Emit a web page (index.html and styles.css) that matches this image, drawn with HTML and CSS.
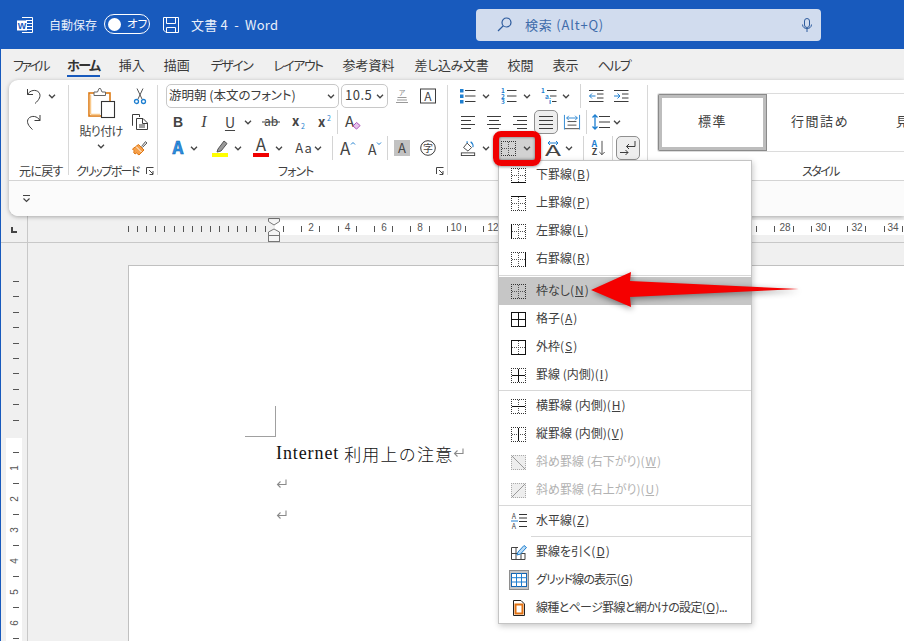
FILE: index.html
```html
<!DOCTYPE html>
<html lang="ja">
<head>
<meta charset="utf-8">
<title>文書 4 - Word</title>
<link rel="stylesheet" href="styles.css">
</head>
<body>
<svg class="defs" xmlns="http://www.w3.org/2000/svg">
  <symbol id="chev" viewBox="0 0 8 5"><path d="M1 .8 4 3.8 7 .8" fill="none" stroke="#444" stroke-width="1.3"/></symbol>
  <symbol id="dots" viewBox="0 0 15 15"><path d="M0 .5H15M0 14.500H15M.5 0V15M14.500 0V15" fill="none" stroke="#333" stroke-dasharray="1 1"/><path d="M1 7.500H15M7.500 1V15" fill="none" stroke="#555" stroke-dasharray="1 1"/></symbol>
  <symbol id="b-bottom" viewBox="0 0 15 15"><use href="#dots"/><path d="M0 14.5h15" stroke="#111"/></symbol>
  <symbol id="b-top" viewBox="0 0 15 15"><use href="#dots"/><path d="M0 .5h15" stroke="#111"/></symbol>
  <symbol id="b-left" viewBox="0 0 15 15"><use href="#dots"/><path d="M.5 0v15" stroke="#111"/></symbol>
  <symbol id="b-right" viewBox="0 0 15 15"><use href="#dots"/><path d="M14.5 0v15" stroke="#111"/></symbol>
  <symbol id="b-all" viewBox="0 0 15 15"><g fill="none" stroke="#111"><rect x=".5" y=".5" width="14" height="14"/><path d="M7.5 0v15M0 7.5h15"/></g></symbol>
  <symbol id="b-out" viewBox="0 0 15 15"><use href="#dots"/><rect x=".5" y=".5" width="14" height="14" fill="none" stroke="#111"/></symbol>
  <symbol id="b-in" viewBox="0 0 15 15"><use href="#dots"/><path d="M7.5 1v13M1 7.5h13" stroke="#111"/></symbol>
  <symbol id="b-h" viewBox="0 0 15 15"><use href="#dots"/><path d="M1 7.5h13" stroke="#111"/></symbol>
  <symbol id="b-v" viewBox="0 0 15 15"><use href="#dots"/><path d="M7.5 1v13" stroke="#111"/></symbol>
  <symbol id="b-d1" viewBox="0 0 15 15"><rect width="15" height="15" fill="#eee"/><path d="M0 .5H15M0 14.500H15M.5 0V15M14.500 0V15" fill="none" stroke="#aaa" stroke-dasharray="1 1"/><path d="M1 1 14 14" stroke="#999"/></symbol>
  <symbol id="b-d2" viewBox="0 0 15 15"><rect width="15" height="15" fill="#eee"/><path d="M0 .5H15M0 14.500H15M.5 0V15M14.500 0V15" fill="none" stroke="#aaa" stroke-dasharray="1 1"/><path d="M14 1 1 14" stroke="#999"/></symbol>
  <symbol id="ret" viewBox="0 0 11 10"><path d="M10 .5V5.500H1.500M4.500 2.500 1.500 5.500 4.500 8.500" fill="none" stroke="#8a8a8a" stroke-width="1.100"/></symbol>
</svg>

<div class="app">
  <header class="titlebar">
    <svg class="tb-word" viewBox="0 0 16 16"><path d="M5 .5H15.500V15.500H5M9 3.500H15M10 6.500H15M10 9.500H15M9 12.500H15" fill="none" stroke="#fff"/><rect y="3.500" width="10" height="10" fill="#fff"/><text x="5" y="11.500" class="tw">W</text></svg>
    <span class="tb-auto">自動保存</span>
    <span class="toggle"><span class="knob"></span><span class="toggle-t">オフ</span></span>
    <svg class="tb-save" viewBox="0 0 16 16"><g fill="none" stroke="#fff"><path d="M.5.500H15.500V15.500H3L.5 13Z"/><path d="M3.500.500V6.500H12.500V.500M3.500 15.500V10.500H12.500V15.500"/></g></svg>
    <span class="tb-title">文書 4&nbsp; -&nbsp; Word</span>
    <div class="search">
      <svg class="s-ic" viewBox="0 0 15 15"><circle cx="9.500" cy="5.500" r="4.500" fill="none" stroke="#2e5c9e" stroke-width="1.200"/><path d="M6.300 8.800 1 14" stroke="#2e5c9e" stroke-width="1.200"/></svg>
      <span class="s-text">検索 (Alt+Q)</span>
      <svg class="s-mic" viewBox="0 0 10 14"><rect x="2.500" y=".5" width="5" height="9" rx="2.500" fill="none" stroke="#2e5c9e"/><path d="M.5 6.500C.5 12 9.500 12 9.500 6.500M5 11V14" fill="none" stroke="#2e5c9e"/></svg>
    </div>
  </header>

  <nav class="tabs">
    <span class="tab kana first-tab">ファイル</span>
    <span class="tab active kana">ホーム</span>
    <span class="tab">挿入</span>
    <span class="tab">描画</span>
    <span class="tab kana wide">デザイン</span>
    <span class="tab kana wide">レイアウト</span>
    <span class="tab wide1">参考資料</span>
    <span class="tab semi wide1">差し込み文書</span>
    <span class="tab">校閲</span>
    <span class="tab">表示</span>
    <span class="tab kana">ヘルプ</span>
  </nav>

  <section class="ribbon">
    <div class="ribbon-top">
      <div class="group g-undo">
        <div class="rows">
          <div class="row">
            <svg class="ic ml17" viewBox="0 0 16 16"><path d="M1.500 1V6.500H7M1.500 6.500C4 2 10 1 13 4.500 15.500 8 13 12 9 15.500"/></svg>
            <svg class="chev ml6"><use href="#chev"/></svg>
          </div>
          <div class="row">
            <svg class="ic ml17" viewBox="0 0 16 16"><path d="M14 1V6.500H8.500M14 6.500C11.500 2 5.500 1 2.500 4.500 0 8 2.500 12 6.500 15.500"/></svg>
          </div>
        </div>
        <div class="lbl l-undo"><span class="tight1">元に戻す</span></div>
      </div>
      <i class="vsep"></i>

      <div class="group g-clip">
        <div class="rows clip-body">
          <div class="paste">
            <svg class="paste-ic" viewBox="0 0 28 31"><rect x="1" y="5" width="21" height="23" fill="#fff" stroke="#dc7a14" stroke-width="1.600"/><path d="M2.500 26.500H12M2.500 6.500V26" stroke="#f9c98c" stroke-width="1.500"/><path d="M6 7.500V4H9.500L11 .5H12.500L14 4H17.500V7.500Z" fill="#fff" stroke="#666"/><rect x="13.500" y="13.500" width="13" height="16" fill="#fff" stroke="#333" stroke-width="1.100"/></svg>
            <span class="paste-t tight1">貼り付け</span>
            <svg class="chev"><use href="#chev"/></svg>
          </div>
          <div class="clip-tools">
            <div class="row c">
              <svg class="ic" viewBox="0 0 16 16"><path d="M5 .5 10 11M11 .5 6 11" stroke="#555"/><circle cx="4.500" cy="13.500" r="2" stroke="#1e7fd0" stroke-width="1.300"/><circle cx="11.500" cy="13.500" r="2" stroke="#1e7fd0" stroke-width="1.300"/></svg>
            </div>
            <div class="row c">
              <svg class="ic" viewBox="0 0 16 16"><path d="M1 11.500H.5V.5H7.500V3"/><path d="M4.500 4.500H11L15.500 9V15.500H4.500ZM10.500 4.500V9.500H15.500M7 11H13M7 13H13"/></svg>
            </div>
            <div class="row c">
              <svg class="ic" viewBox="0 0 16 16"><path d="M9.500 6.500 13.500 1.500 15 3 10.500 7.500" fill="#d8d8d8" stroke="#666"/><path d="M6.500 4.500 12 10 7 15 4.500 13 3 14 1.500 12 2.500 11 .5 9Z" fill="#f6a04a" stroke="#de7510"/><path d="M4 6.500 9.500 12" stroke="#fff"/></svg>
            </div>
          </div>
        </div>
        <div class="lbl l-clip"><span class="tight3">クリップボード</span>
          <svg class="launch" viewBox="0 0 8 8"><path d="M.5 7V.5H7.500M3 3 7 7M7 4V7.500H3.500"/></svg></div>
      </div>
      <i class="vsep"></i>

      <div class="group g-font">
        <div class="rows">
          <div class="row start8">
            <div class="combo c-font"><span class="combo-t">游明朝 (本文のフォント)</span><svg class="chev"><use href="#chev"/></svg></div>
            <div class="combo c-size ml2"><span class="combo-t">10.5</span><svg class="chev"><use href="#chev"/></svg></div>
            <svg class="ic ml6" viewBox="0 0 16 16"><text x="8" y="7" class="t tiny g">ア</text><path d="M3.500 9.500H12.500M3 12H13M2 14.500H14" stroke="#999"/></svg>
            <svg class="ic ml10" viewBox="0 0 16 16"><rect x=".5" y="1" width="15" height="14" /><text x="8" y="13" class="t m">A</text></svg>
          </div>
          <div class="row start8">
            <span class="tx bold ml6">B</span>
            <span class="tx ital ml14">I</span>
            <span class="tx und ml14">U</span>
            <svg class="chev ml8"><use href="#chev"/></svg>
            <svg class="ic18 ml10" viewBox="0 0 18 16"><text x="9" y="12" class="t m">ab</text><path d="M0 8H18"/></svg>
            <svg class="ic14 ml12" viewBox="0 0 14 16"><text x="0" y="12" class="t m bd">x</text><text x="9" y="15" class="t tiny bl ls">2</text></svg>
            <svg class="ic14 ml12" viewBox="0 0 14 16"><text x="0" y="13" class="t m bd">x</text><text x="9" y="7" class="t tiny bl ls">2</text></svg>
            <i class="rsep ml5"></i>
            <svg class="ic18 ml6" viewBox="0 0 18 18"><text x="0" y="15" class="t lg ls">A</text><path d="M9 13.500 13 9.500 17 13 13 17Z" stroke="#a640b4" fill="#e6c4ea"/></svg>
          </div>
          <div class="row start8">
            <svg class="ic ml4" viewBox="0 0 16 18"><text x="8" y="16" class="t xl blA">A</text></svg>
            <svg class="chev ml4"><use href="#chev"/></svg>
            <svg class="bar ml14" viewBox="0 0 16 20"><path d="M6 11 12 3 15 5.500 9 13 5 14Z" fill="#999" stroke="#555"/><rect y="15" width="16" height="4" fill="#ffff00" stroke="none"/></svg>
            <svg class="chev ml6"><use href="#chev"/></svg>
            <svg class="bar ml11" viewBox="0 0 16 20"><text x="8" y="13" class="t lg">A</text><rect y="15" width="16" height="4" fill="#f00000" stroke="none"/></svg>
            <svg class="chev ml6"><use href="#chev"/></svg>
            <span class="tx aa ml12">Aa</span>
            <svg class="chev ml1"><use href="#chev"/></svg>
            <i class="rsep ml10"></i>
            <svg class="ic ml7" viewBox="0 0 16 16"><text x="0" y="15" class="t lg ls">A</text><path d="M11 4.500 13 2.500 15 4.500" stroke="#1e7fd0"/></svg>
            <svg class="ic ml11" viewBox="0 0 16 16"><text x="1" y="15" class="t m2 ls">A</text><path d="M10 2.500 12 4.500 14 2.500" stroke="#1e7fd0"/></svg>
            <i class="rsep ml4"></i>
            <span class="greyA ml6">A</span>
            <svg class="ic ml10" viewBox="0 0 16 16"><circle cx="8" cy="8" r="7.300"/><text x="8" y="12" class="t s11">字</text></svg>
          </div>
        </div>
        <div class="lbl l-font"><span class="tight2">フォント</span>
          <svg class="launch" viewBox="0 0 8 8"><path d="M.5 7V.5H7.500M3 3 7 7M7 4V7.500H3.500"/></svg></div>
      </div>
      <i class="vsep"></i>

      <div class="group g-para">
        <div class="rows">
          <div class="row">
            <svg class="ic ml12" viewBox="0 0 16 16"><path d="M5 2.500H15.500M5 8H15.500M5 13.500H15.500"/><path d="M0 1H3.500V4.500H0ZM0 6.500H3.500V10H0ZM0 12H3.500V15.500H0Z" fill="#1e7fd0" stroke="none"/></svg>
            <svg class="chev ml6"><use href="#chev"/></svg>
            <svg class="ic ml11" viewBox="0 0 16 16"><path d="M6 2.500H15.500M6 8H15.500M6 13.500H15.500"/><text x="2" y="5" class="t n">1</text><text x="2" y="10.500" class="t n">2</text><text x="2" y="16" class="t n">3</text></svg>
            <svg class="chev ml6"><use href="#chev"/></svg>
            <svg class="ic ml10" viewBox="0 0 16 16"><path d="M6 2.500H15.500M9 8H15.500M11 13.500H15.500"/><text x="2" y="5" class="t n">1</text><text x="6" y="10.500" class="t n">a</text><text x="9" y="16" class="t n">i</text></svg>
            <svg class="chev ml5"><use href="#chev"/></svg>
            <i class="rsep ml10"></i>
            <svg class="ic ml7" viewBox="0 0 16 16"><path d="M1 2.500H15.500M9 6H15.500M9 10H15.500M1 13.500H15.500"/><path d="M7.500 8H1.500M4 5.500 1.500 8 4 10.500" stroke="#1e7fd0"/></svg>
            <svg class="ic ml9" viewBox="0 0 16 16"><path d="M1 2.500H15.500M9 6H15.500M9 10H15.500M1 13.500H15.500"/><path d="M1 8H7M4.500 5.500 7 8 4.500 10.500" stroke="#1e7fd0"/></svg>
          </div>
          <div class="row">
            <svg class="ic ml12" viewBox="0 0 16 16"><path d="M1 2.500H15M1 6.500H11M1 10.500H15M1 14.500H11"/></svg>
            <svg class="ic ml10" viewBox="0 0 16 16"><path d="M1 2.500H15M3 6.500H13M1 10.500H15M3 14.500H13"/></svg>
            <svg class="ic ml10" viewBox="0 0 16 16"><path d="M1 2.500H15M5 6.500H15M1 10.500H15M5 14.500H15"/></svg>
            <span class="active-btn ml6"><svg class="ic" viewBox="0 0 16 16"><path d="M1 2.500H15M1 6.500H15M1 10.500H15M1 14.500H15"/></svg></span>
            <svg class="ic18 ml5" viewBox="0 0 18 18"><path d="M4 8.500H14M4 12.500H14M1 16.500H17"/><path d="M.5 1V17.500M17.500 1V17.500M3 4.500H15M5.500 2 3 4.500 5.500 7M12.500 2 15 4.500 12.500 7" stroke="#1e7fd0"/></svg>
            <i class="rsep ml5"></i>
            <svg class="ic18 ml5" viewBox="0 0 18 16"><path d="M7 2.500H18M7 8H18M7 13.500H18"/><path d="M3 1V15M.5 3.500 3 1 5.500 3.500M.5 12.500 3 15 5.500 12.500" stroke="#1e7fd0" stroke-width="1.300"/></svg>
            <svg class="chev ml3"><use href="#chev"/></svg>
          </div>
          <div class="row">
            <svg class="ic ml12" viewBox="0 0 16 18"><path d="M3 8.500 7 3.500 12 8.500 8 12.500Z"/><path d="M7 3.500V1.500M11 2C13.500 4 14 6 13.500 8" stroke="#1e7fd0" stroke-width="1.300"/><rect x=".5" y="14.500" width="15" height="3" /></svg>
            <svg class="chev ml6"><use href="#chev"/></svg>
            <span class="border-btn ml7"><svg class="bi"><use href="#dots"/></svg><svg class="chev"><use href="#chev"/></svg></span>
            <svg class="ic ml8" viewBox="0 0 16 16"><text x="0" y="16" class="t xw ls" textLength="16" lengthAdjust="spacingAndGlyphs">A</text><path d="M3 3H13M5 1 3 3 5 5M11 1 13 3 11 5" stroke="#1e7fd0"/></svg>
            <svg class="chev ml4"><use href="#chev"/></svg>
            <i class="rsep ml10"></i>
            <svg class="ic ml6" viewBox="0 0 16 18"><text x="4" y="8" class="t b9 bl">A</text><text x="4" y="17" class="t b9">Z</text><path d="M12.500 1V16.500M9.500 13.500 12.500 16.500 15.500 13.500"/></svg>
            <i class="rsep ml6"></i>
            <span class="active-btn ml3"><svg class="ic" viewBox="0 0 16 16"><path d="M0 12.500H8M5.500 10 8 12.500 5.500 15"/><path d="M15 1V6.500H6.500M9 4 6.500 6.500 9 9" /></svg></span>
          </div>
        </div>
      </div>
      <i class="vsep"></i>

      <div class="group g-style">
        <div class="gallery">
          <span class="sty sel">標準</span>
          <span class="sty second">行間詰め</span>
          <span class="sty third">見出し 1</span>
        </div>
        <div class="lbl l-style"><span class="tight3">スタイル</span></div>
      </div>
    </div>
    <div class="qat">
      <svg class="qat-ic" viewBox="0 0 9 8"><path d="M1 .5H8M1.500 3.500 4.500 6.500 7.500 3.500" fill="none" stroke="#444" stroke-width="1.200"/></svg>
    </div>
  </section>

  <div class="ruler-row">
    <div class="corner"><svg class="tabstop" viewBox="0 0 6 6"><path d="M0 0H2V4H6V6H0Z" fill="#444"/></svg></div>
    <svg class="h-ruler" width="876" height="26" viewBox="28 216 876 26">
      <rect x="275" y="220" width="629" height="15" fill="#fff"/>
      <line x1="128" y1="229" x2="270" y2="229" class="tick" stroke-dasharray="1 8.100"/>
      <line x1="283" y1="229" x2="904" y2="229" class="tick" stroke-dasharray="1 17.200"/>
      <g class="rnum">
        <text x="311" y="231">2</text><text x="347.500" y="231">4</text><text x="384" y="231">6</text><text x="420" y="231">8</text><text x="456" y="231">10</text><text x="493" y="231">12</text><text x="529" y="231">14</text><text x="785" y="231">28</text><text x="821" y="231">30</text><text x="857" y="231">32</text><text x="893" y="231">34</text>
      </g>
      <path d="M268.500 218.500H279.500V221.500L274 225 268.500 221.500Z" fill="#f6f6f6" stroke="#777"/>
      <path d="M268.500 235.500V232L274 229 279.500 232V235.500Z" fill="#f6f6f6" stroke="#777"/>
      <rect x="268.500" y="235.500" width="11" height="6" fill="#f6f6f6" stroke="#777"/>
    </svg>
  </div>

  <main class="work">
    <div class="v-col">
      <svg class="v-ruler" width="26" height="398" viewBox="0 243 26 398">
        <rect x="5" y="438" width="16" height="203" fill="#fff"/>
        <line x1="15" y1="281" x2="15" y2="432" class="vtick" stroke-dasharray="1 14.400"/>
        <line x1="15" y1="452" x2="15" y2="641" class="vtick" stroke-dasharray="1 30"/>
        <g class="rnum">
          <text transform="translate(17 468) rotate(-90)">1</text>
          <text transform="translate(17 499) rotate(-90)">2</text>
          <text transform="translate(17 530) rotate(-90)">3</text>
          <text transform="translate(17 561) rotate(-90)">4</text>
          <text transform="translate(17 592) rotate(-90)">5</text>
          <text transform="translate(17 623) rotate(-90)">6</text>
        </g>
      </svg>
    </div>
    <div class="canvas">
      <article class="page">
        <div class="crop"></div>
        <p class="para"><span class="lat">Internet</span><span class="jp">利用上の注意</span><svg class="ret"><use href="#ret"/></svg></p>
        <p class="para"><svg class="ret"><use href="#ret"/></svg></p>
        <p class="para"><svg class="ret"><use href="#ret"/></svg></p>
      </article>
    </div>
  </main>
</div>

<ul class="menu">
  <li class="item"><span class="mi"><svg class="bi"><use href="#b-bottom"/></svg></span>下罫線(<u>B</u>)</li>
  <li class="item"><span class="mi"><svg class="bi"><use href="#b-top"/></svg></span>上罫線(<u>P</u>)</li>
  <li class="item"><span class="mi"><svg class="bi"><use href="#b-left"/></svg></span>左罫線(<u>L</u>)</li>
  <li class="item"><span class="mi"><svg class="bi"><use href="#b-right"/></svg></span>右罫線(<u>R</u>)</li>
  <li class="sep first"></li>
  <li class="item hover"><span class="mi"><svg class="bi"><use href="#dots"/></svg></span>枠なし(<u>N</u>)</li>
  <li class="item"><span class="mi"><svg class="bi"><use href="#b-all"/></svg></span>格子(<u>A</u>)</li>
  <li class="item"><span class="mi"><svg class="bi"><use href="#b-out"/></svg></span>外枠(<u>S</u>)</li>
  <li class="item"><span class="mi"><svg class="bi"><use href="#b-in"/></svg></span>罫線 (内側)(<u>I</u>)</li>
  <li class="sep"></li>
  <li class="item"><span class="mi"><svg class="bi"><use href="#b-h"/></svg></span>横罫線 (内側)(<u>H</u>)</li>
  <li class="item"><span class="mi"><svg class="bi"><use href="#b-v"/></svg></span>縦罫線 (内側)(<u>V</u>)</li>
  <li class="item off"><span class="mi"><svg class="bi"><use href="#b-d1"/></svg></span>斜め罫線 (右下がり)(<u>W</u>)</li>
  <li class="item off"><span class="mi"><svg class="bi"><use href="#b-d2"/></svg></span>斜め罫線 (右上がり)(<u>U</u>)</li>
  <li class="sep"></li>
  <li class="item"><span class="mi"><svg class="ic" viewBox="0 0 16 16"><text x="3" y="6" class="t n2">A</text><text x="3" y="15.500" class="t n2">A</text><path d="M0 8H7" stroke="#1e7fd0"/><path d="M8 1.500H16M8 5H16M8 8.500H16M8 13.500H16" stroke="#333"/></svg></span>水平線(<u>Z</u>)</li>
  <li class="sep inset"></li>
  <li class="item"><span class="mi"><svg class="ic" viewBox="0 0 16 16"><path d="M7 3.500H.5V15.500H14V9M.5 9.500H14M5 3.500V15.500M10 10V15.500" stroke="#444"/><path d="M6 11 7 8 13 1.500 15.500 3.500 9.500 10Z" fill="#bcdcf5" stroke="#1e7fd0"/></svg></span>罫線を引く(<u>D</u>)</li>
  <li class="item t-grid"><span class="mi"><span class="grid-box"><svg class="ic" viewBox="0 0 16 14"><rect x=".5" y=".5" width="15" height="13" fill="#fff" stroke="#1565b0"/><path d="M5.500 0V14M10.500 0V14M0 4.700H16M0 9H16" stroke="#1e7fd0"/></svg></span></span>グリッド線の表示(<u>G</u>)</li>
  <li class="item t-long"><span class="mi"><svg class="ic" viewBox="0 0 16 16"><path d="M2.500.5H10L13.500 4V15.500H2.500Z" fill="#fff" stroke="#222"/><rect x="4.500" y="4.500" width="7" height="9" fill="#fff" stroke="#e07010" stroke-width="2"/></svg></span>線種とページ罫線と網かけの設定(<u>O</u>)...</li>
</ul>

<div class="hl"></div>
<svg class="arrow" width="226" height="52" viewBox="585 264 226 52">
  <path d="M591 290 631 272 630 281 799 289 630 297 631 307Z" fill="#f50000"/>
</svg>
</body>
</html>
```

FILE: styles.css
```css
* { box-sizing: border-box; }
html, body { margin: 0; padding: 0; width: 904px; height: 641px; overflow: hidden; }
body {
  position: relative;
  font-family: "Noto Sans CJK JP", "Liberation Sans", sans-serif;
  font-size: 12px;
  color: #444;
  font-feature-settings: "palt";
  background: #f0f0f0;
}
.defs { display: none; }

.app { height: 641px; border-left: 1px solid #185abd; display: flex; flex-direction: column; background: #f0f0f0; }

/* Title bar */
.titlebar { flex: none; height: 49px; background: #185abd; color: #fff; display: flex; align-items: center; padding-left: 16px; margin-left: -1px; }
.tb-word { width: 16px; height: 16px; margin-left: 1px; }
.tw { font: bold 9px "Liberation Sans", sans-serif; fill: #185abd; text-anchor: middle; }
.tb-auto { margin-left: 16px; font-size: 12px; color: #e8effa; width: 47px; white-space: nowrap; }
.toggle { margin-left: 8px; width: 46px; height: 20px; border: 1.5px solid #fff; border-radius: 10px; display: flex; align-items: center; padding-left: 3px; margin-top: -1px; }
.knob { width: 13px; height: 13px; background: #fff; border-radius: 50%; }
.toggle-t { margin-left: 6px; font-size: 11.500px; line-height: 1; }
.tb-save { width: 16px; height: 16px; margin-left: 13px; }
.tb-title { margin-left: 12px; font-size: 13px; color: #e8effa; width: 285px; white-space: nowrap; letter-spacing: .2px; }
.search { width: 345px; height: 32px; background: #d1dcee; border-radius: 4px; display: flex; align-items: center; padding-left: 21px; color: #3f6cab; }
.s-ic { width: 15px; height: 15px; }
.s-text { margin-left: 13px; font-size: 13px; width: 277px; white-space: nowrap; letter-spacing: .8px; }
.s-mic { width: 10px; height: 14px; }

/* Tabs */
.tabs { flex: none; height: 31px; display: flex; gap: 19px; padding-left: 12px; align-items: flex-start; }
.tab { font-size: 13px; line-height: 31px; height: 28px; white-space: nowrap; color: #3a3a3a; }
.tab.active { font-weight: 700; border-bottom: 2px solid #185abd; color: #333; }
.kana { letter-spacing: -1.500px; }
.first-tab { letter-spacing: -2.500px; }
.semi { letter-spacing: -.3px; }
.wide { margin-left: 2px; }
.wide1 { margin-left: 1px; }

/* Ribbon */
.ribbon { flex: none; height: 136px; margin-left: 8px; background: #fff; border-radius: 9px 0 0 9px; box-shadow: 0 1px 4px rgba(0,0,0,.3); position: relative; z-index: 1; display: flex; flex-direction: column; }
.ribbon-top { height: 101px; display: flex; border-bottom: 1px solid #d4d4d4; }
.group { display: flex; flex-direction: column; flex: none; }
.g-undo { width: 59px; }
.g-clip { width: 88px; }
.g-font { width: 289px; }
.g-para { width: 199px; }
.g-style { flex: 1; min-width: 0; }
.vsep { flex: none; width: 1px; height: 90px; margin-top: 5px; background: #d8d8d8; }
.rows { height: 81px; padding-top: 3px; }
.row { height: 26px; display: flex; align-items: center; }
.row.c { justify-content: center; }
.start8 { padding-left: 8px; }
.lbl { height: 19px; display: flex; align-items: center; line-height: 1; font-size: 12px; color: #404040; white-space: nowrap; }
.l-undo { padding-left: 10px; }
.l-clip { padding: 0 3px 0 7px; justify-content: space-between; }
.l-font { padding: 0 3px 0 120px; justify-content: space-between; }
.l-style { padding-left: 154px; }
.launch { width: 8px; height: 8px; fill: none; stroke: #444; }
.tight1 { letter-spacing: -.7px; }
.tight2 { letter-spacing: -1px; }
.tight3 { letter-spacing: -1.600px; }

.clip-body { display: flex; }
.paste { width: 60px; margin-left: 2px; display: flex; flex-direction: column; align-items: center; padding-top: 5px; }
.paste-ic { width: 28px; height: 31px; flex: none; margin-left: 1px; }
.paste-t { margin-top: 3px; line-height: 18px; }
.paste .chev { margin-top: 4px; }
.clip-tools { width: 18px; }

/* Icons */
.ic, .ic14, .ic18, .bar, .chev, .bi { flex: none; fill: none; stroke: #3c3c3c; overflow: visible; display: block; }
.ic { width: 16px; height: 16px; }
.ic14 { width: 14px; height: 16px; }
.ic18 { width: 18px; height: 16px; }
.bar { width: 16px; height: 20px; }
.chev { width: 8px; height: 5px; stroke: none; }
.bi { width: 15px; height: 15px; stroke: none; }

.t { font-family: "Noto Sans CJK JP", sans-serif; fill: #444; stroke: none; text-anchor: middle; }
.ls { text-anchor: start; }
.tiny { font-size: 7px; }
.m { font-size: 12px; }
.m2 { font-size: 14px; text-anchor: start; }
.lg { font-size: 17px; }
.xl { font-size: 19px; font-weight: 700; }
.xw { font-size: 15px; }
.s11 { font-size: 10px; }
.n { font-size: 6.500px; font-weight: 700; fill: #1e7fd0; }
.n2 { font-size: 7px; fill: #444; }
.b9 { font-size: 10px; font-weight: 700; }
.bd { font-weight: 700; text-anchor: start; font-size: 13px; }
.bl { fill: #1e7fd0; }
.g { fill: #888; }
.blA { fill: #2b8fe2; stroke: #0f5fae; stroke-width: .6px; }

.tx { flex: none; width: 12px; text-align: center; font-size: 14px; line-height: 18px; color: #444; }
.bold { font-weight: 700; font-family: "Liberation Sans", sans-serif; }
.ital { font-family: "Liberation Serif", serif; font-style: italic; font-size: 16px; }
.und { text-decoration: underline; text-underline-offset: 2px; font-family: "Noto Sans CJK JP", sans-serif; }
.aa { width: 18px; letter-spacing: 1px; font-size: 13px; }
.rsep { flex: none; width: 1px; height: 24px; background: #d4d4d4; }
.greyA { flex: none; width: 16px; height: 16px; background: #c2c2c2; text-align: center; font-size: 13px; line-height: 16px; }

.combo { flex: none; height: 24px; border: 1px solid #c8c8c8; border-radius: 5px; display: flex; align-items: center; justify-content: space-between; padding: 0 3px 0 2px; }
.c-font { width: 173px; }
.c-size { width: 47px; padding-left: 3px; }
.combo-t { font-size: 12.500px; line-height: 20px; padding-bottom: 2px; white-space: nowrap; color: #3c3c3c; }
.c-size .combo-t { font-size: 13px; letter-spacing: .5px; }

.active-btn { flex: none; width: 24px; height: 24px; background: #eee; border: 1px solid #8f8f8f; border-radius: 5px; display: flex; align-items: center; justify-content: center; }
.border-btn { flex: none; width: 40px; height: 26px; background: #d2d2d2; display: flex; align-items: center; justify-content: space-between; padding: 0 6px 0 4px; }

.ml1 { margin-left: 1px; } .ml2 { margin-left: 2px; } .ml3 { margin-left: 3px; } .ml4 { margin-left: 4px; }
.ml5 { margin-left: 5px; } .ml6 { margin-left: 6px; } .ml7 { margin-left: 7px; } .ml8 { margin-left: 8px; }
.ml9 { margin-left: 9px; } .ml10 { margin-left: 10px; } .ml11 { margin-left: 11px; } .ml12 { margin-left: 12px; }
.ml14 { margin-left: 14px; } .ml17 { margin-left: 17px; }

/* Styles gallery */
.gallery { height: 59px; margin: 13px 0 9px 9px; display: flex; border: 1px solid #dcdcdc; border-right: 0; border-radius: 3px 0 0 3px; overflow: hidden; flex: none; }
.sty { flex: none; display: flex; align-items: center; font-size: 13px; letter-spacing: 1.500px; color: #404040; white-space: nowrap; padding-bottom: 4px; }
.sel { width: 109px; height: 57px; justify-content: center; border: 4px solid #bdbdbd; outline: 1px solid #8a8a8a; outline-offset: -1px; }
.second { width: 106px; justify-content: center; }
.third { padding-left: 23px; }

.qat { flex: 1; background: #fbfbfb; border-radius: 0 0 0 9px; display: flex; align-items: center; padding-left: 13px; }
.qat-ic { width: 9px; height: 8px; }

/* Rulers */
.ruler-row { flex: none; height: 27px; display: flex; border-bottom: 1px solid #c8c8c8; }
.corner { width: 27px; border-right: 1px solid #c8c8c8; display: flex; padding: 11px 0 0 10px; }
.tabstop { width: 6px; height: 6px; }
.h-ruler { display: block; flex: none; }
.tick { stroke: #555; stroke-width: 6px; shape-rendering: crispEdges; }
.vtick { stroke: #555; stroke-width: 6px; shape-rendering: crispEdges; }
.rnum text { font: 10px "Liberation Sans", sans-serif; fill: #555; text-anchor: middle; }

.work { flex: 1; min-height: 0; display: flex; }
.v-col { flex: none; width: 27px; border-right: 1px solid #c8c8c8; }
.v-ruler { display: block; }
.canvas { flex: 1; padding: 22px 0 0 100px; overflow: hidden; }
.page { width: 900px; height: 600px; background: #fff; border: 1px solid #c0c0c0; padding-top: 140px; }
.crop { width: 31px; height: 31px; margin-left: 116px; border-right: 1px solid #a0a0a0; border-bottom: 1px solid #a0a0a0; }
.para { margin: 0 0 0 147px; height: 31px; line-height: 31px; color: #111; font-feature-settings: normal; display: flex; align-items: center; white-space: nowrap; padding-top: 1px; }
.lat { font-family: "Liberation Serif", serif; font-size: 18px; letter-spacing: .9px; }
.jp { margin-left: 5px; font-size: 17px; font-weight: 300; letter-spacing: 1.200px; }
.ret { width: 11px; height: 10px; flex: none; }

/* Dropdown menu */
.menu { position: absolute; left: 498px; top: 160px; width: 254px; height: 464px; margin: 0; padding: 0; list-style: none; background: #fff; border: 1px solid #c4c4c4; box-shadow: 1px 2px 6px rgba(0,0,0,.22); z-index: 2; }
.item { height: 28px; display: flex; align-items: flex-start; padding-left: 12px; font-size: 12px; line-height: 25px; color: #404040; white-space: pre; }
.item u { text-underline-offset: 1px; margin: 0 1px; }
.hover { background: #c6c6c6; }
.off { color: #b2b2b2; }
.t-grid { letter-spacing: -.85px; }
.t-long { letter-spacing: -.65px; }
.mi { flex: none; align-self: center; width: 15px; margin-right: 10px; display: flex; justify-content: center; }
.sep { height: 1px; margin: 1px 0; background: #d8d8d8; }
.sep.first { margin-top: 2px; }
.sep.inset { margin-left: 32px; }
.grid-box { flex: none; width: 20px; height: 20px; background: #c6c6c6; border: 1px solid #8e8e8e; display: flex; align-items: center; justify-content: center; }
.grid-box .ic { height: 14px; }

/* Annotations over the screenshot */
.hl { position: absolute; left: 493px; top: 131px; width: 48px; height: 35px; border: 6px solid #f00000; border-radius: 8px; box-shadow: 0 1px 3px rgba(0,0,0,.4), inset 0 0 3px rgba(0,0,0,.5); z-index: 3; }
.arrow { position: absolute; left: 585px; top: 264px; z-index: 3; filter: drop-shadow(1px 2px 3px rgba(0,0,0,.45)); }
```
